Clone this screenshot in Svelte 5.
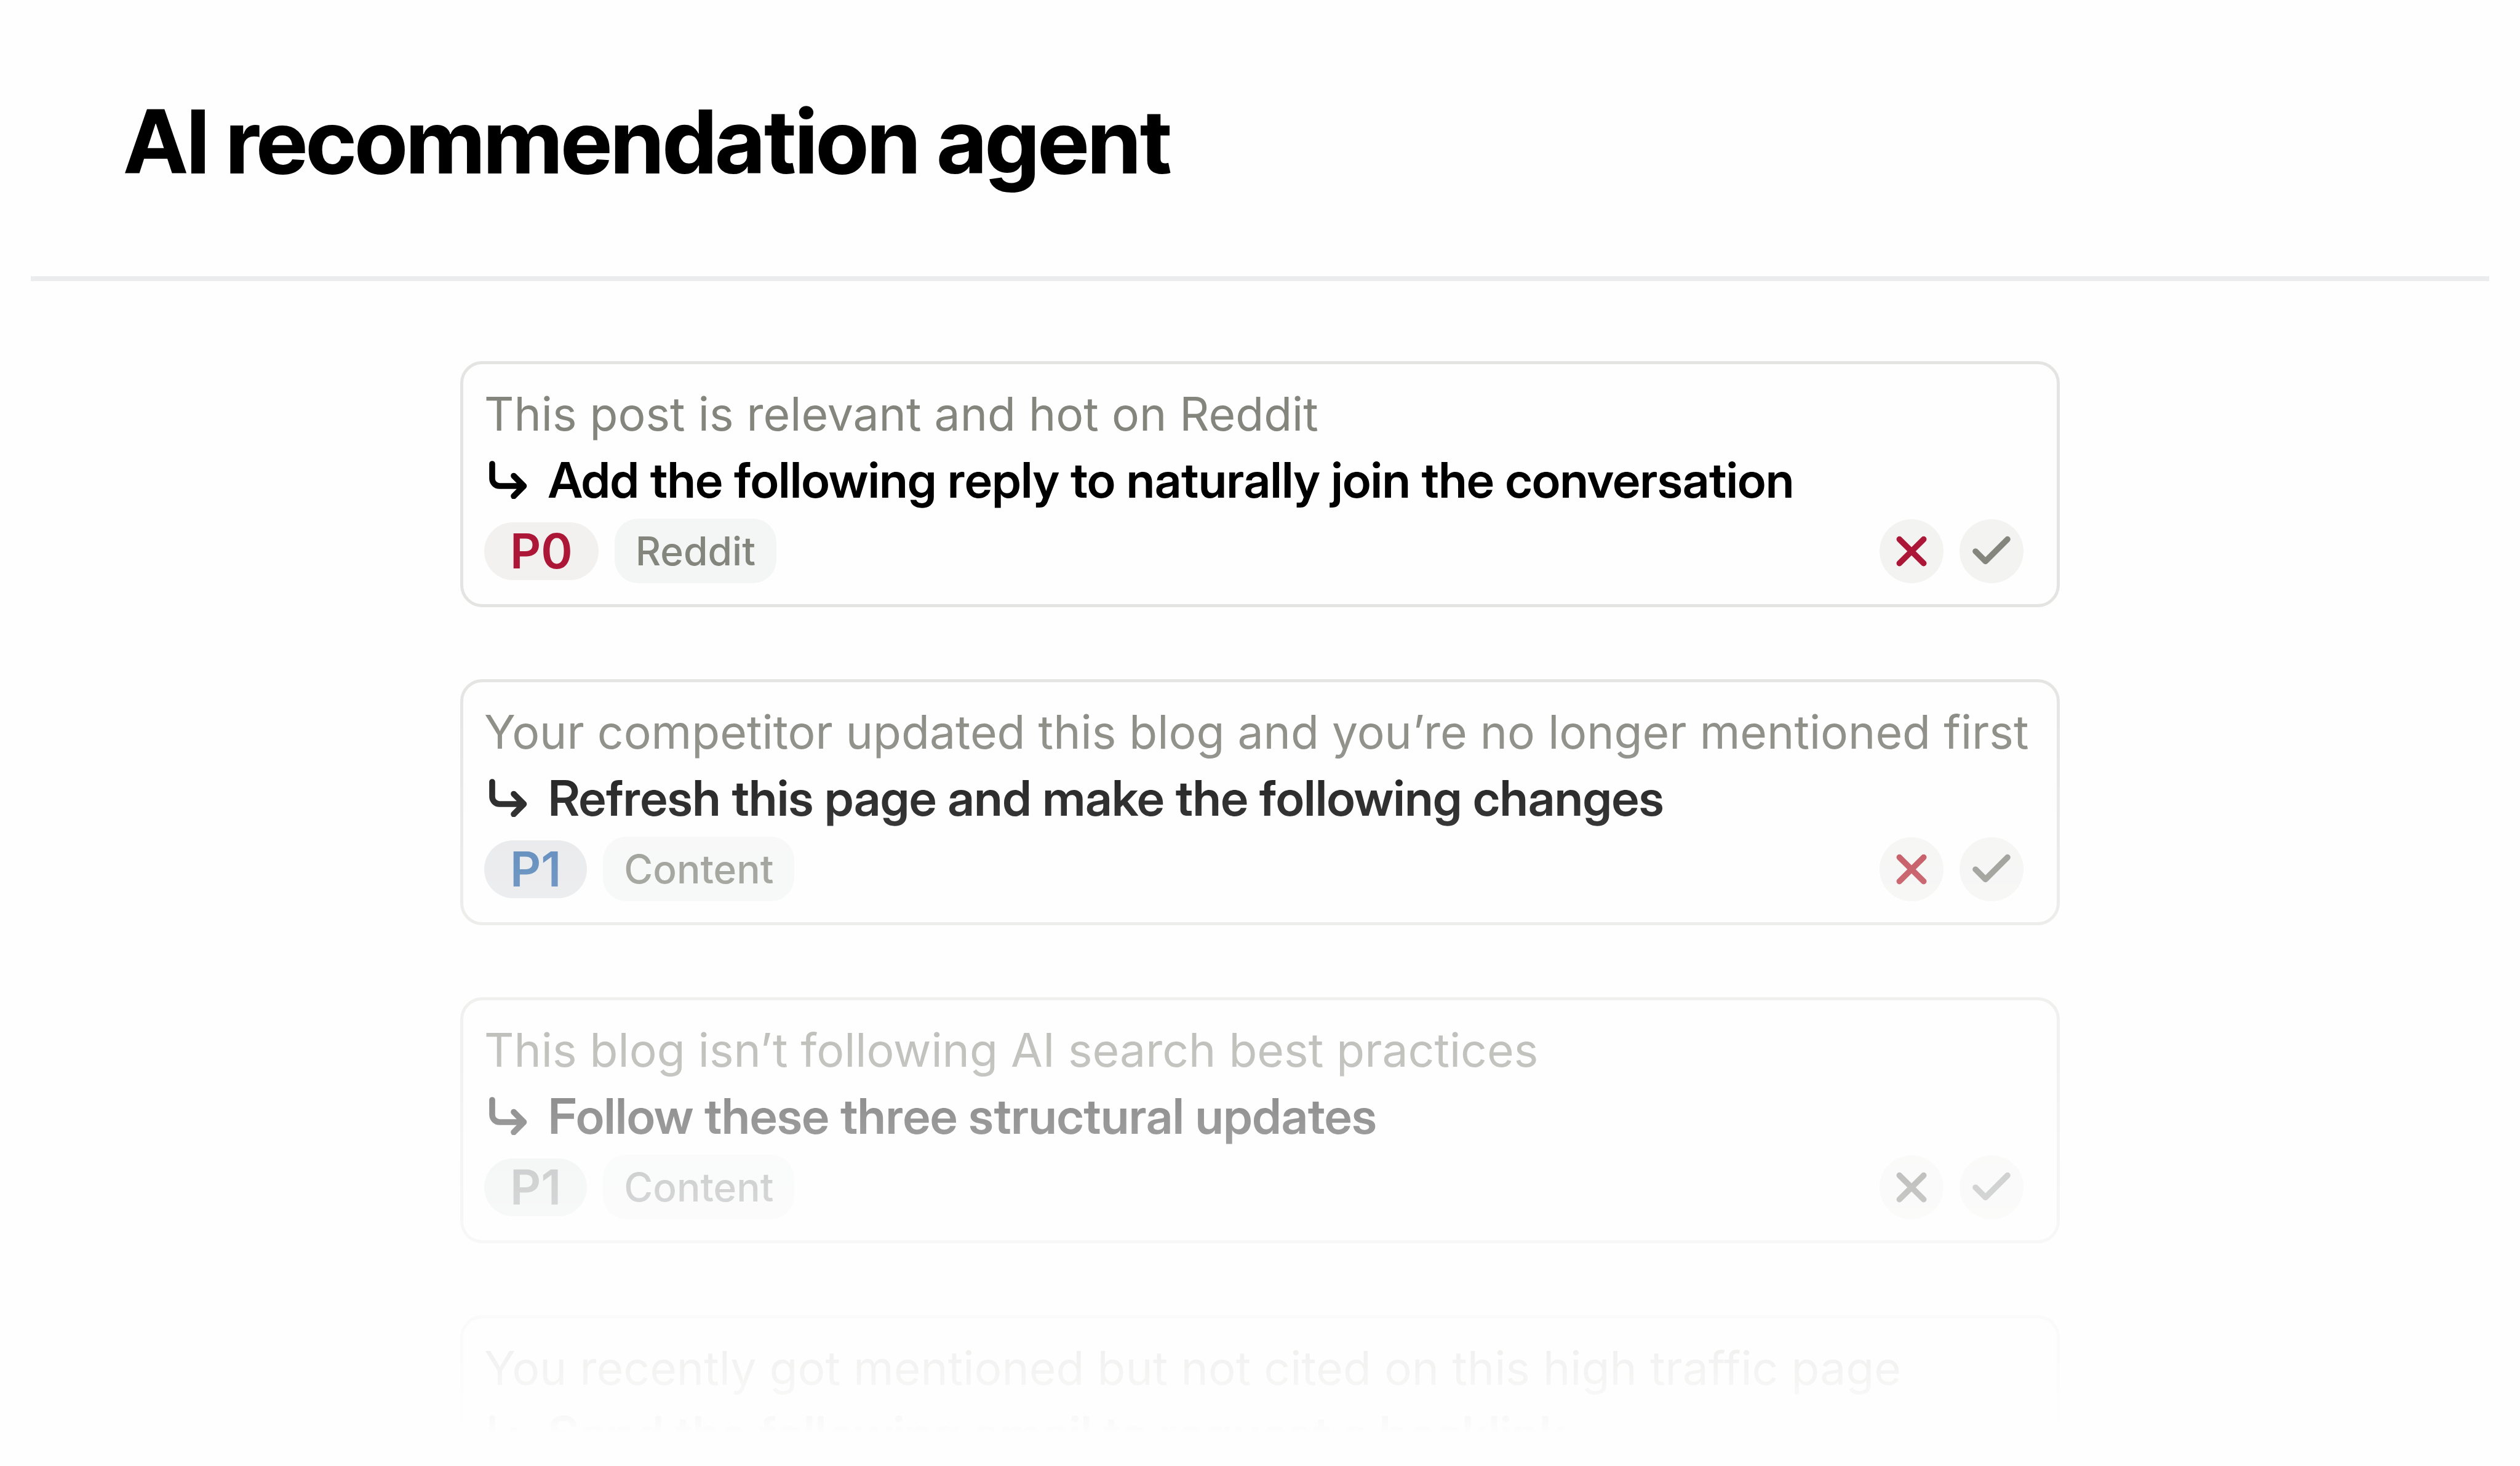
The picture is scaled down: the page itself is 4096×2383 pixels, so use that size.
<script lang="ts">
  interface Recommendation {
    id: number;
    reason: string;
    action: string;
    priority?: string;
    tone?: 'red' | 'blue' | 'muted';
    tag?: string;
  }

  let recommendations = $state<Recommendation[]>([
    {
      id: 1,
      reason: 'This post is relevant and hot on Reddit',
      action: 'Add the following reply to naturally join the conversation',
      priority: 'P0',
      tone: 'red',
      tag: 'Reddit',
    },
    {
      id: 2,
      reason: 'Your competitor updated this blog and you’re no longer mentioned first',
      action: 'Refresh this page and make the following changes',
      priority: 'P1',
      tone: 'blue',
      tag: 'Content',
    },
    {
      id: 3,
      reason: 'This blog isn’t following AI search best practices',
      action: 'Follow these three structural updates',
      priority: 'P1',
      tone: 'muted',
      tag: 'Content',
    },
    {
      id: 4,
      reason: 'You recently got mentioned but not cited on this high traffic page',
      action: 'Send the following email to request a backlink',
    },
  ]);

  function resolve(id: number) {
    recommendations = recommendations.filter((r) => r.id !== id);
  }
</script>

<main class="page">
  <header class="page-header">
    <h1>AI recommendation agent</h1>
  </header>

  <ul class="list">
    {#each recommendations as rec (rec.id)}
      <li
        class="card"
        class:card-blue={rec.tone === 'blue'}
        class:card-muted={rec.tone === 'muted'}
      >
        <p class="reason">{rec.reason}</p>
        <p class="action">
          <svg class="arrow" viewBox="0 0 62 62" aria-hidden="true">
            <path d="M5 5V29a12 12 0 0 0 12 12H56M40 24.5L56.5 41L40 57.5" />
          </svg>
          <span>{rec.action}</span>
        </p>
        <div class="card-footer">
          {#if rec.priority}
            <span class="priority priority-{rec.tone}">{rec.priority}</span>
          {/if}
          {#if rec.tag}
            <span class="tag">{rec.tag}</span>
          {/if}
          <div class="card-actions">
            <button
              type="button"
              class="btn-round btn-dismiss"
              aria-label="Dismiss"
              onclick={() => resolve(rec.id)}
            >
              <svg viewBox="0 0 104 104" aria-hidden="true">
                <path d="M32.3 32.6L71.7 71.6M71.7 32.6L32.3 71.6" />
              </svg>
            </button>
            <button
              type="button"
              class="btn-round btn-accept"
              aria-label="Accept"
              onclick={() => resolve(rec.id)}
            >
              <svg viewBox="0 0 104 104" aria-hidden="true">
                <path d="M26 52.2L42.2 68.4L78 32.6" />
              </svg>
            </button>
          </div>
        </div>
      </li>
    {/each}
  </ul>
</main>

<style>
  :global(body) {
    margin: 0;
    background: #fefefe;
  }

  .page {
    height: 100vh;
    overflow: hidden;
    font-family: Inter, 'Liberation Sans', sans-serif;
    color: #000;
  }

  .page-header {
    margin: 0 50px;
    padding: 142px 152px 131px;
    border-bottom: 8px solid #ebeced;
  }

  h1 {
    margin: 0;
    font-family: 'Inter Tight', Inter, sans-serif;
    font-size: 143px;
    font-weight: 700;
    line-height: 176px;
  }

  /* the queue fades out towards the bottom */
  .list {
    display: flex;
    flex-direction: column;
    gap: 117px;
    max-width: 2600px;
    margin: 130px auto 0;
    padding: 0;
    list-style: none;
    mask-image: linear-gradient(to bottom, #000 481px, transparent 1744px);
  }

  .card {
    box-sizing: border-box;
    padding: 27px 54px 34px 34px;
    border: 5px solid #e4e4e2;
    border-radius: 36px;
  }

  .reason,
  .action {
    margin: 0;
    line-height: 107px;
  }

  .reason {
    color: #84857d;
    font-size: 75px;
    white-space: nowrap;
  }

  .action {
    display: flex;
    align-items: center;
    gap: 34px;
    padding-left: 8px;
    font-family: 'Inter Display', Inter, sans-serif;
    font-size: 80px;
    font-weight: 600;
  }

  .arrow {
    flex: none;
    width: 62px;
    height: 62px;
  }

  svg {
    fill: none;
    stroke: currentColor;
    stroke-width: 9.6;
    stroke-linecap: round;
    stroke-linejoin: round;
  }

  .card-footer {
    display: flex;
    align-items: center;
    gap: 26px;
    height: 105px;
    margin-top: 10px;
  }

  .priority {
    padding: 0 42px;
    border-radius: 47px;
    font-size: 78px;
    font-weight: 600;
    line-height: 94px;
  }

  .priority-red {
    background: #f2f1ef;
    color: #ac1737;
  }

  .priority-blue {
    background: #e4e5e8;
    color: #366dab;
  }

  .priority-muted {
    background: #e6e9e9;
    color: #757779;
  }

  .tag {
    padding: 0 34px;
    border-radius: 38px;
    background: #f4f6f5;
    color: #84857d;
    font-size: 64px;
    font-weight: 500;
    line-height: 105px;
  }

  .card-actions {
    display: flex;
    gap: 26px;
    margin-left: auto;
  }

  .btn-round {
    width: 104px;
    height: 104px;
    padding: 0;
    border: none;
    border-radius: 50%;
    background: #f3f3f2;
    color: #84857d;
    cursor: pointer;
  }

  .btn-round svg {
    display: block;
  }

  .btn-dismiss {
    color: #ac1737;
  }

  .card-blue .btn-dismiss {
    color: #b52b39;
  }

  .card-muted .btn-dismiss {
    color: #474742;
  }

  .card-muted .tag,
  .card-muted .btn-accept {
    color: #757779;
  }
</style>
